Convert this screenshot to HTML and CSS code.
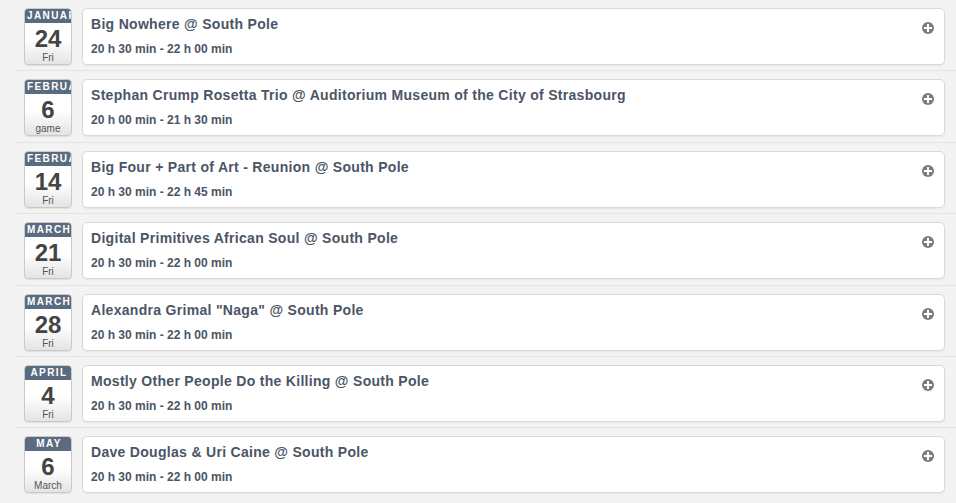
FILE: index.html
```html
<!DOCTYPE html>
<html>
<head>
<meta charset="utf-8">
<link rel="stylesheet" href="styles.css">
</head>
<body>
<ul class="events">
  <li class="event">
    <div class="cal"><div class="cal-month">JANUARY</div><div class="cal-day">24</div><div class="cal-wd">Fri</div></div>
    <div class="card"><div class="title">Big Nowhere @ South Pole</div><div class="time">20 h 30 min - 22 h 00 min</div><span class="plus"></span></div>
  </li>
  <li class="event">
    <div class="cal"><div class="cal-month">FEBRUARY</div><div class="cal-day">6</div><div class="cal-wd">game</div></div>
    <div class="card"><div class="title">Stephan Crump Rosetta Trio @ Auditorium Museum of the City of Strasbourg</div><div class="time">20 h 00 min - 21 h 30 min</div><span class="plus"></span></div>
  </li>
  <li class="event">
    <div class="cal"><div class="cal-month">FEBRUARY</div><div class="cal-day">14</div><div class="cal-wd">Fri</div></div>
    <div class="card"><div class="title">Big Four + Part of Art - Reunion @ South Pole</div><div class="time">20 h 30 min - 22 h 45 min</div><span class="plus"></span></div>
  </li>
  <li class="event">
    <div class="cal"><div class="cal-month">MARCH</div><div class="cal-day">21</div><div class="cal-wd">Fri</div></div>
    <div class="card"><div class="title">Digital Primitives African Soul @ South Pole</div><div class="time">20 h 30 min - 22 h 00 min</div><span class="plus"></span></div>
  </li>
  <li class="event">
    <div class="cal"><div class="cal-month">MARCH</div><div class="cal-day">28</div><div class="cal-wd">Fri</div></div>
    <div class="card"><div class="title">Alexandra Grimal "Naga" @ South Pole</div><div class="time">20 h 30 min - 22 h 00 min</div><span class="plus"></span></div>
  </li>
  <li class="event">
    <div class="cal"><div class="cal-month">APRIL</div><div class="cal-day">4</div><div class="cal-wd">Fri</div></div>
    <div class="card"><div class="title">Mostly Other People Do the Killing @ South Pole</div><div class="time">20 h 30 min - 22 h 00 min</div><span class="plus"></span></div>
  </li>
  <li class="event">
    <div class="cal"><div class="cal-month">MAY</div><div class="cal-day">6</div><div class="cal-wd">March</div></div>
    <div class="card"><div class="title">Dave Douglas &amp; Uri Caine @ South Pole</div><div class="time">20 h 30 min - 22 h 00 min</div><span class="plus"></span></div>
  </li>
</ul>
</body>
</html>
```
FILE: styles.css
```css
html, body {
  margin: 0;
  padding: 0;
  background: #f3f3f3;
  font-family: "Liberation Sans", Arial, sans-serif;
  overflow: hidden;
}
.events {
  list-style: none;
  margin: 0 0 0 15px;
  padding: 0;
}
.event {
  display: flex;
  align-items: flex-start;
  gap: 10px;
  padding: 8px 11px 6.4px 9px;
  border-top: 1px solid #e4e4e4;
  margin-top: -1px;
}
.cal {
  flex: 0 0 auto;
  width: 46px;
  height: 55px;
  border: 1px solid #c9c9c9;
  border-radius: 4px;
  overflow: hidden;
  background: linear-gradient(#ffffff, #ffffff 55%, #e4e4e4);
  box-shadow: 0 1px 1px rgba(0,0,0,0.08);
  text-align: center;
  display: flex;
  flex-direction: column;
}
.cal-month {
  background: #5b6b7f;
  color: #fff;
  font-size: 10px;
  font-weight: bold;
  letter-spacing: 1.4px;
  height: 14px;
  line-height: 14px;
  white-space: nowrap;
  overflow: hidden;
  padding-left: 2px;
  flex: 0 0 auto;
}
.cal-day {
  font-size: 24px;
  font-weight: bold;
  color: #444;
  line-height: 26px;
  margin-top: 3px;
}
.cal-wd {
  font-size: 10px;
  color: #555;
  line-height: 12px;
}
.card {
  flex: 1 1 auto;
  position: relative;
  height: 55px;
  background: #fff;
  border: 1px solid #d9d9d9;
  border-radius: 5px;
  box-shadow: 0 1px 2px rgba(0,0,0,0.06);
  padding: 0 0 0 8px;
}
.title {
  font-size: 14px;
  font-weight: bold;
  color: #4b5566;
  margin-top: 7px;
  line-height: 16px;
  letter-spacing: 0.3px;
}
.time {
  font-size: 12px;
  font-weight: bold;
  color: #4b5566;
  margin-top: 10px;
  line-height: 14px;
}
.plus {
  position: absolute;
  right: 10px;
  top: 13px;
  width: 12px;
  height: 12px;
  border-radius: 50%;
  background: #7c7c7c;
}
.plus::before,
.plus::after {
  content: "";
  position: absolute;
  background: #fff;
}
.plus::before {
  left: 5px;
  top: 2px;
  width: 2px;
  height: 8px;
}
.plus::after {
  left: 2px;
  top: 5px;
  width: 8px;
  height: 2px;
}
```
